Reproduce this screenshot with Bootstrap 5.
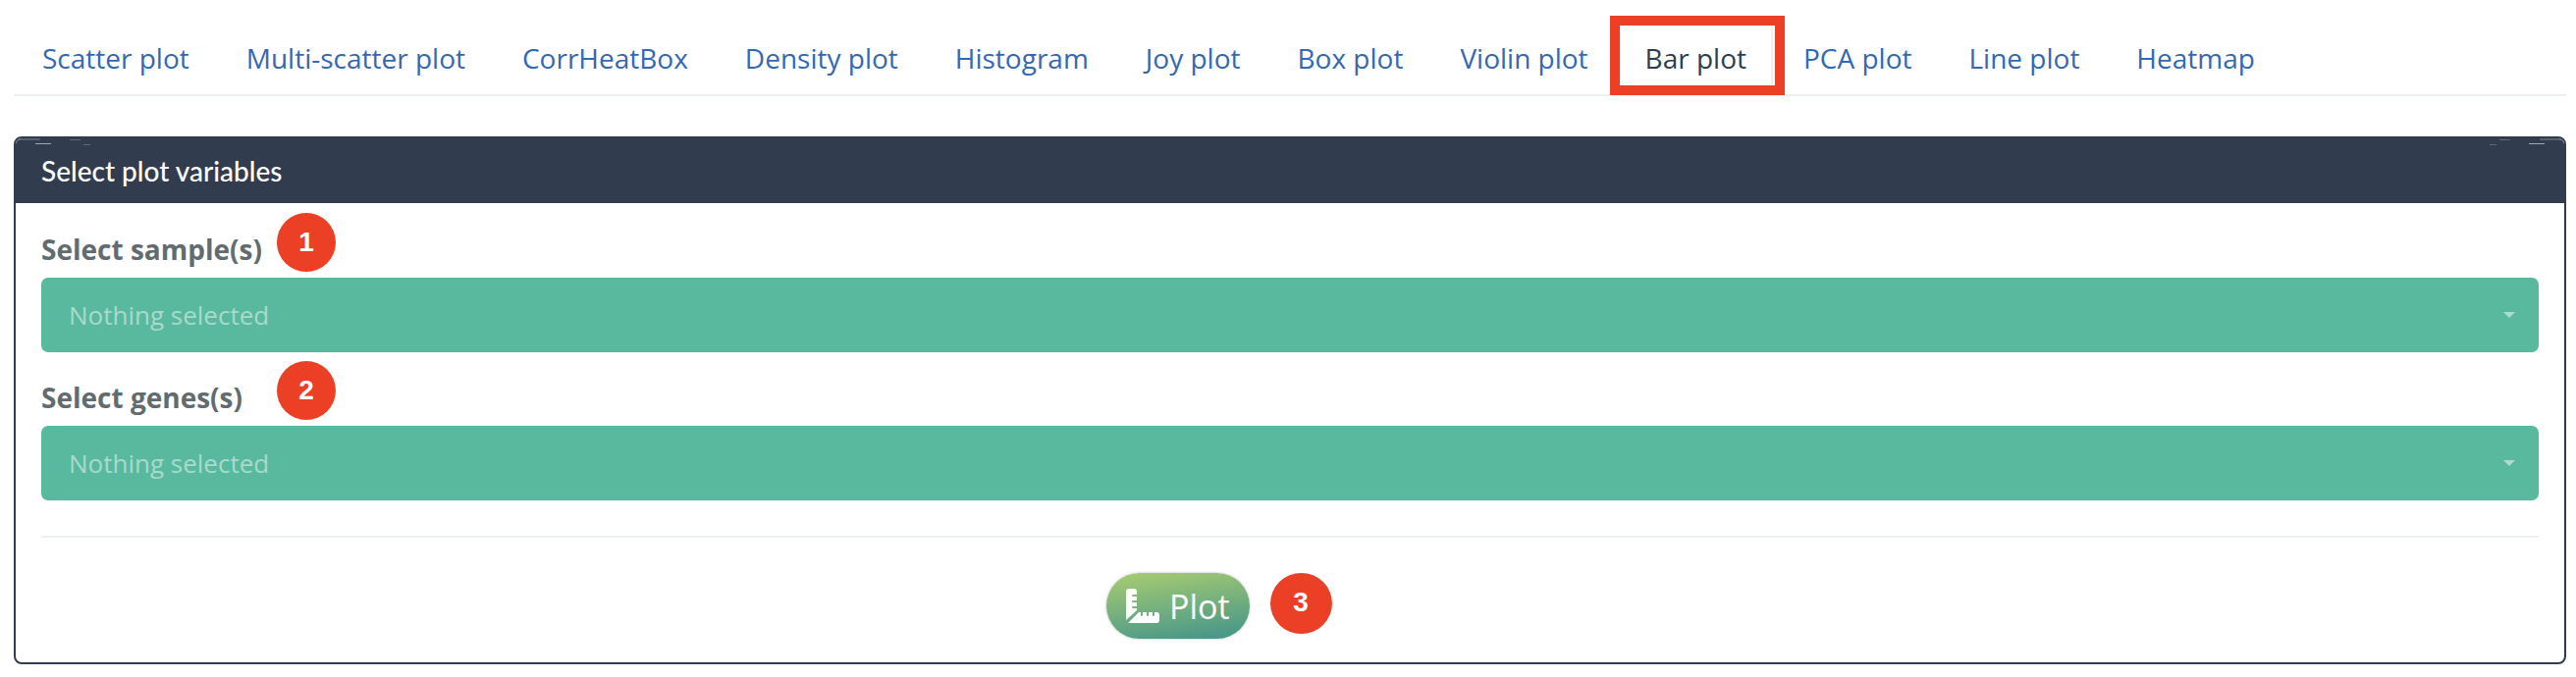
<!DOCTYPE html>
<html lang="en">
<head>
<meta charset="utf-8">
<meta name="viewport" content="width=device-width, initial-scale=1">
<title>Bar plot</title>
<link href="https://cdn.jsdelivr.net/npm/bootstrap@5.3.0/dist/css/bootstrap.min.css" rel="stylesheet">
<style>
  body { font-family: "Open Sans", sans-serif; font-size: 28px; line-height: 42px; color: #2c3e50; background: #fff; }
  .page { padding: 16px 10px 11px 14px; }
  .plot-tabs { --bs-nav-tabs-border-width: 2px; --bs-nav-tabs-border-color: #ecf0f1; gap: 4px; margin-bottom: 41px; padding-left: 2px; }
  .plot-tabs .nav-link { font-size: 28px; line-height: 42px; padding: 20px 25px 16px; color: #3468b3; border: 2px solid transparent; margin-bottom: -2px; }
  .plot-tabs .nav-link:hover { border-color: transparent; }
  .plot-tabs .nav-link.active { color: #2c3e50; background: #fff; border-color: #ecf0f1; position: relative; }
  .plot-tabs .nav-link.active::after { content: ""; position: absolute; inset: -2px -14px -1px -11px; border: 10px solid #eb4026; }
  .panel { --bs-card-border-color: #313d4f; --bs-card-border-width: 2px; --bs-card-border-radius: 8px; --bs-card-inner-border-radius: 6px; }
  .panel > .card-header { position: relative; font-family: Lato, sans-serif; font-size: 28px; font-weight: 500; line-height: 32px; color: #fff; background: #313d4f; padding: 17px 26px; border: 0; }
  .glint { position: absolute; top: 0; left: 0; }
  .glint-end { left: auto; right: 0; transform: scaleX(-1); }
  .panel > .card-body { padding: 1px 26px 24px; }
  .field-row { height: 75px; padding-top: 9px; }
  .field-row label { min-width: 240px; font-size: 28px; font-weight: 700; color: #626c70; padding-top: 16px; }
  .step { width: 60px; height: 60px; flex: none; font: 700 28px/60px "Liberation Sans", sans-serif; color: #fff; background: #eb4026; text-align: center; }
  .step-lg { width: 63px; height: 62px; margin-left: 21px; }
  .picker { height: 76px; padding: 0 28px; font-size: 26px; line-height: 38px; color: #a9dacb; border: 0; border-radius: 7px; background: #58b99f url("data:image/svg+xml,%3Csvg xmlns='http://www.w3.org/2000/svg' width='12' height='6'%3E%3Cpath d='M0 0h12L6 6z' fill='%23addccf'/%3E%3C/svg%3E") no-repeat right 24px center / 12px 6px; }
  .rule { margin: 36px 0; border-top: 2px solid #ecf0f1; opacity: 1; }
  .actions { --bs-gutter-x: 60px; }
  .plot-btn { height: 67px; padding: 0 20px; gap: 9px; font-size: 34px; line-height: 48px; color: #fff; border: 0; border-radius: 34px; background: linear-gradient(172deg, #a4ca72 5%, #46968a 95%); box-shadow: 0 0 3px #bbb; }
</style>
</head>
<body>
<div class="page">
  <ul class="nav nav-tabs plot-tabs">
    <li class="nav-item"><a class="nav-link" href="#">Scatter plot</a></li>
    <li class="nav-item"><a class="nav-link" href="#">Multi-scatter plot</a></li>
    <li class="nav-item"><a class="nav-link" href="#">CorrHeatBox</a></li>
    <li class="nav-item"><a class="nav-link" href="#">Density plot</a></li>
    <li class="nav-item"><a class="nav-link" href="#">Histogram</a></li>
    <li class="nav-item"><a class="nav-link" href="#">Joy plot</a></li>
    <li class="nav-item"><a class="nav-link" href="#">Box plot</a></li>
    <li class="nav-item"><a class="nav-link" href="#">Violin plot</a></li>
    <li class="nav-item"><a class="nav-link active" aria-current="page" href="#">Bar plot</a></li>
    <li class="nav-item"><a class="nav-link" href="#">PCA plot</a></li>
    <li class="nav-item"><a class="nav-link" href="#">Line plot</a></li>
    <li class="nav-item"><a class="nav-link" href="#">Heatmap</a></li>
  </ul>

  <div class="card panel">
    <div class="card-header">
      <svg class="glint" width="84" height="10" aria-hidden="true"><path d="M0 5Q1 1 5 1H25" fill="none" stroke="#7b848e"/><path d="M20 5.500H36" stroke="#a0a7ae"/><path d="M55 1.500H66M69 6.500H76" stroke="#5f6976"/></svg>
      Select plot variables
      <svg class="glint glint-end" width="84" height="10" aria-hidden="true"><path d="M0 5Q1 1 5 1H25" fill="none" stroke="#7b848e"/><path d="M20 5.500H36" stroke="#a0a7ae"/><path d="M55 1.500H66M69 6.500H76" stroke="#5f6976"/></svg>
    </div>
    <div class="card-body">
      <div class="field-row d-flex align-items-start">
        <label for="samples">Select sample(s)</label>
        <span class="step rounded-circle">1</span>
      </div>
      <select class="form-select picker" id="samples"><option>Nothing selected</option></select>
      <div class="field-row d-flex align-items-start">
        <label for="genes">Select genes(s)</label>
        <span class="step rounded-circle">2</span>
      </div>
      <select class="form-select picker" id="genes"><option>Nothing selected</option></select>
      <hr class="rule">
      <div class="row actions">
        <div class="col-7 offset-5 d-flex align-items-start">
          <button type="button" class="btn plot-btn d-flex align-items-center">
            <svg width="35" height="35" viewBox="0 0 35 35" fill="#fff" aria-hidden="true">
              <path d="M0 32V3Q0 0 3 0H8Q11 0 11 3V6H7Q6 6 6 7T7 8H11V12H7Q6 12 6 13T7 14H11V18H7Q6 18 6 19T7 20H11V22Z"/>
              <path d="M2 35L13 24H15V27Q15 28 16 28T17 27V24H21V27Q21 28 22 28T23 27V24H27V27Q27 28 28 28T29 27V24H31Q34 24 34 27V32Q34 35 31 35Z"/>
            </svg>
            Plot
          </button>
          <span class="step step-lg rounded-circle">3</span>
        </div>
      </div>
    </div>
  </div>
</div>
<script src="https://cdn.jsdelivr.net/npm/bootstrap@5.3.0/dist/js/bootstrap.bundle.min.js"></script>
</body>
</html>
